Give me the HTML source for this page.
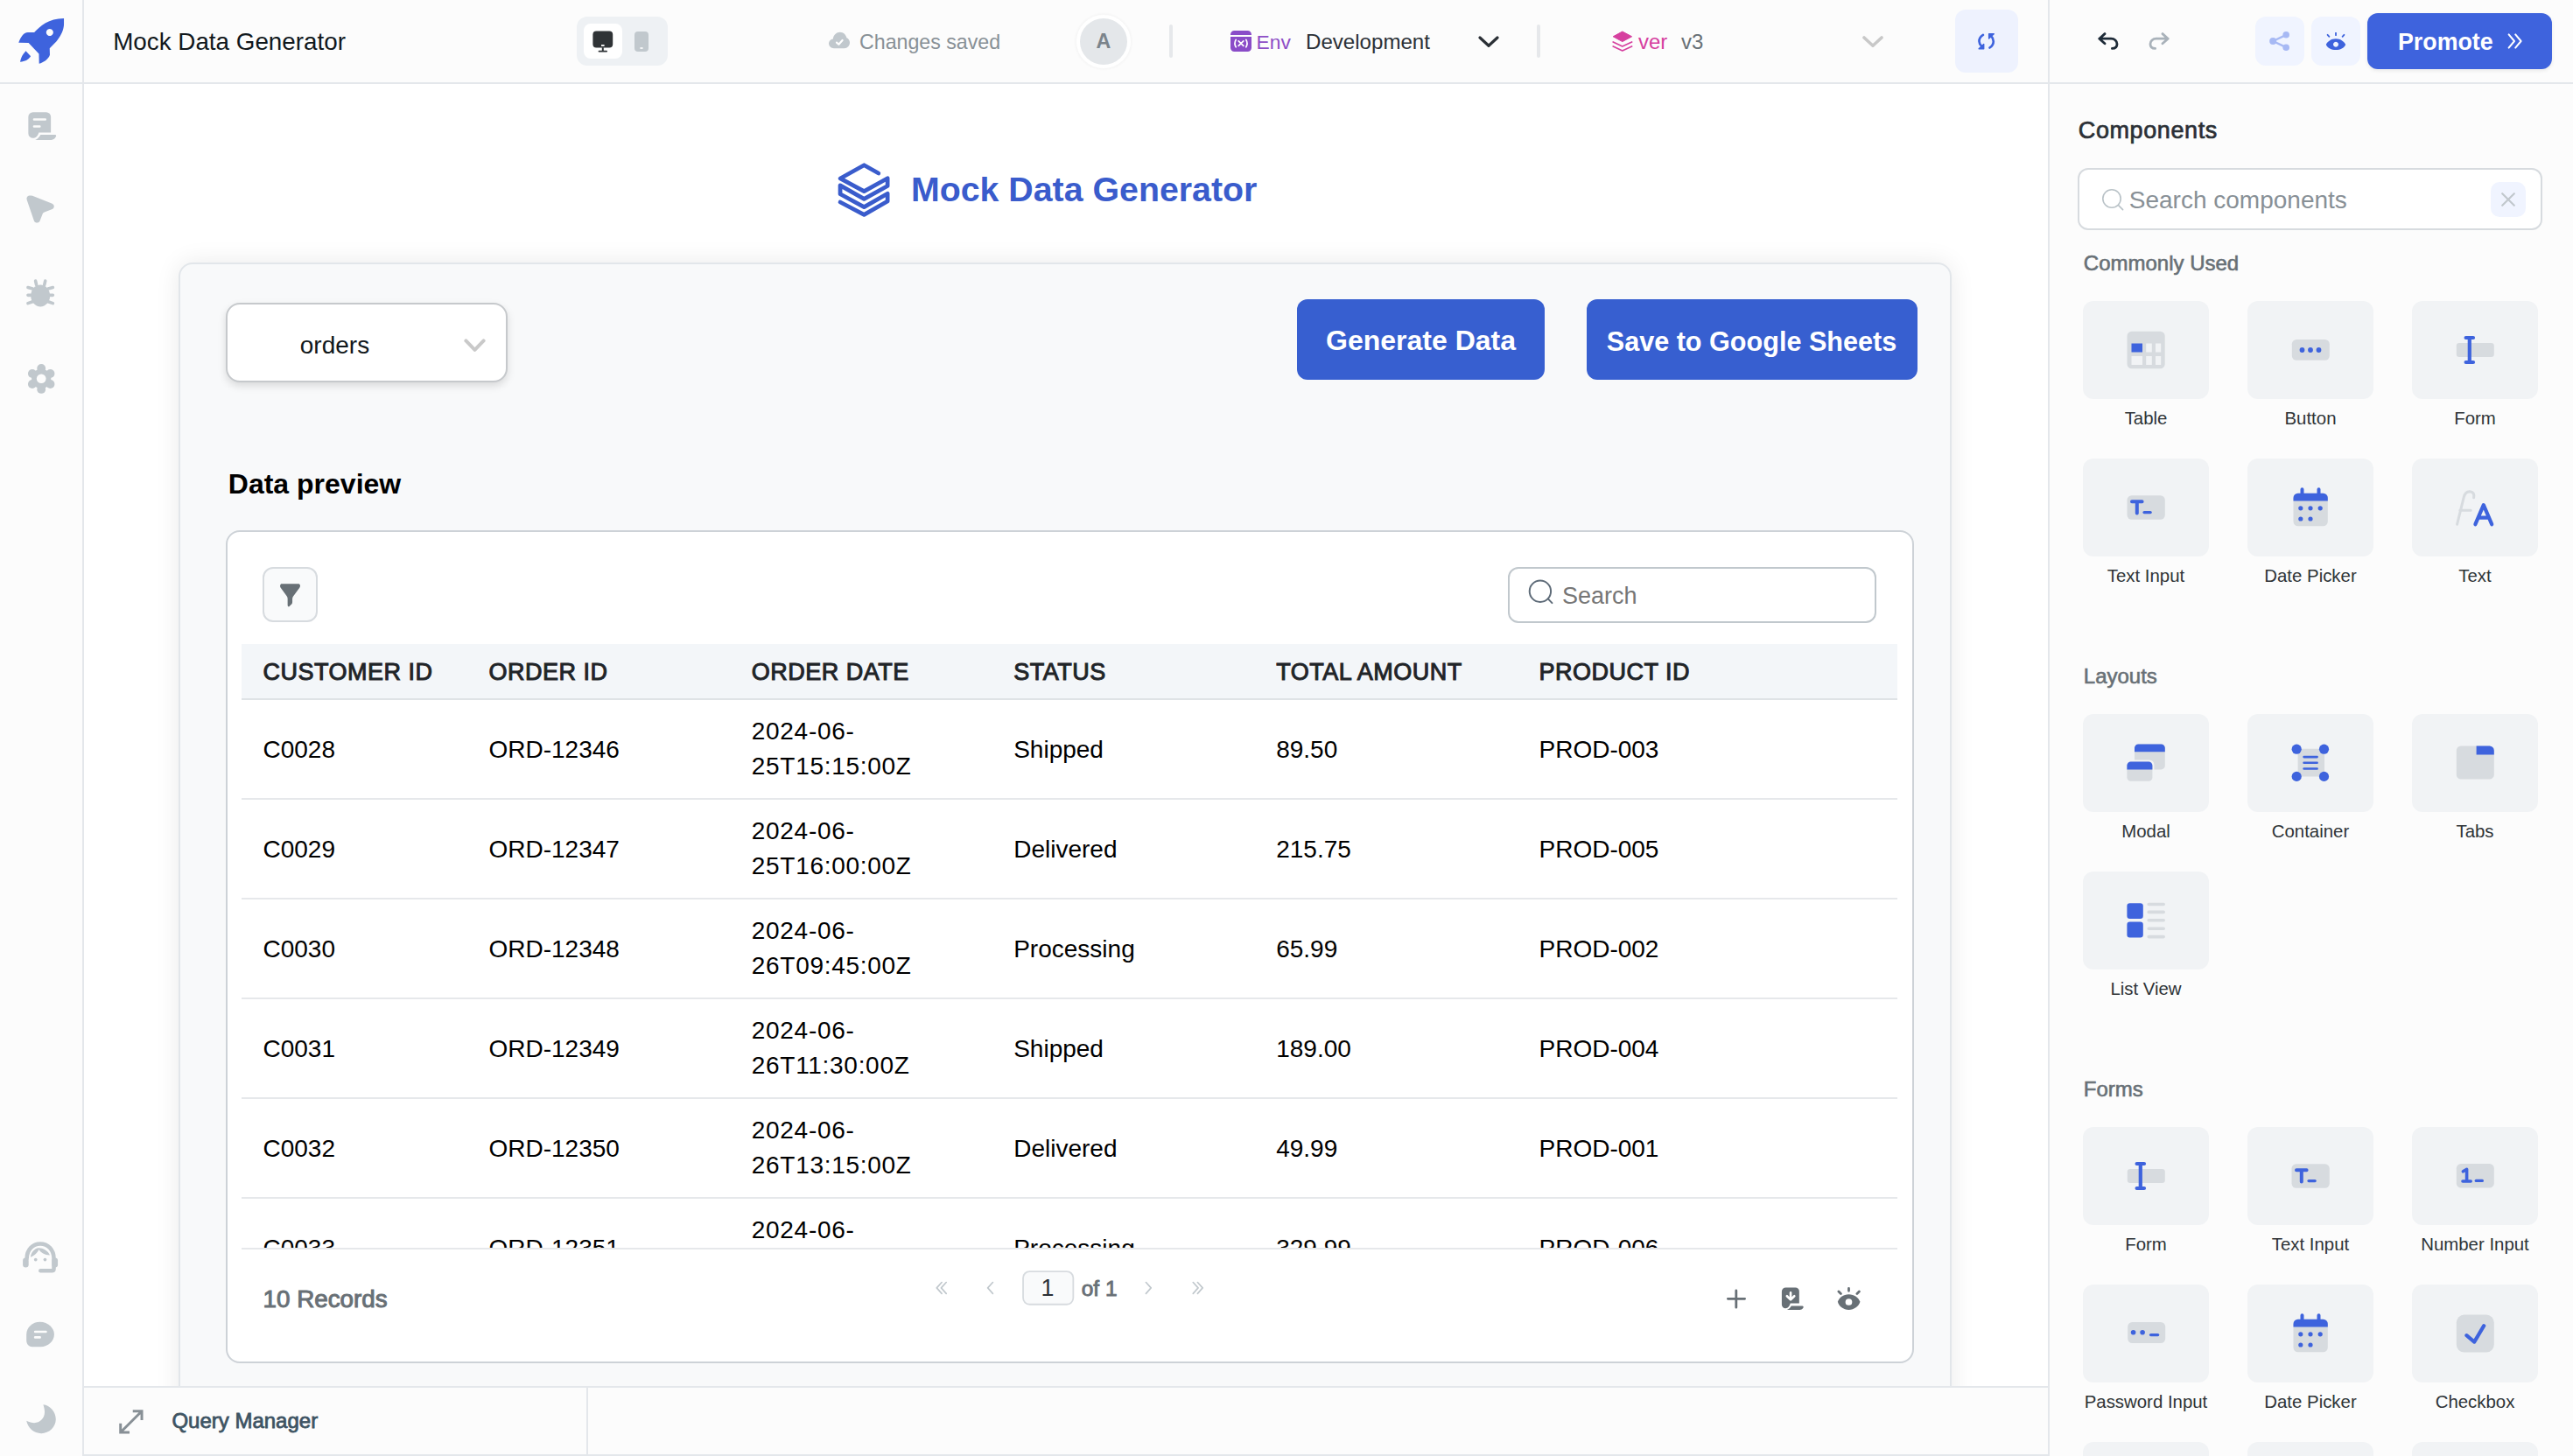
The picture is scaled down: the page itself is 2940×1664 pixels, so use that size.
<!DOCTYPE html>
<html>
<head>
<meta charset="utf-8">
<style>
@media (min-width: 2000px) { html { zoom: 2; } }
* { box-sizing: border-box; margin: 0; padding: 0; }
html, body { width: 1470px; height: 832px; overflow: hidden; background: #fff; }
body { font-family: "Liberation Sans", sans-serif; color: #11181c; position: relative; }
.abs { position: absolute; }
.nw { white-space: nowrap; }
svg { display: block; position: absolute; }
#header { left: 0; top: 0; width: 1470px; height: 48px; background: #fcfcfc; border-bottom: 1px solid #e4e7eb; }
#sidebar { left: 0; top: 0; width: 48px; height: 832px; background: #fcfcfc; border-right: 1px solid #e4e7eb; }
#rpanel { left: 1170px; top: 48px; width: 300px; height: 784px; background: #fcfcfc; border-left: 1px solid #e4e7eb; }
#hsep { left: 1170px; top: 0; width: 1px; height: 48px; background: #e4e7eb; }
#qbar { left: 48px; top: 792px; width: 1122px; height: 40px; background: #fcfcfc; border-top: 1px solid #e4e7eb; border-bottom: 1px solid #e4e7eb; }
.txt { position: absolute; white-space: nowrap; line-height: 1; }
</style>
</head>
<body>
<!-- ============ CANVAS ============ -->
<div id="canvas" class="abs" style="left:48px;top:48px;width:1122px;height:744px;background:#fff;overflow:hidden">
  <!-- heading logo -->
  <svg style="left:427px;top:42px" width="40" height="37.5" viewBox="0 0 1553 1456">
    <path fill="none" stroke="#3a5ccc" stroke-width="92" stroke-linecap="round" stroke-linejoin="round" d="M1045 350 L725 170 L195 465 L725 750 L1245 460 L1245 630 L725 920 L195 620 L195 810 L725 1100 L1245 800 L1245 970 L725 1270 L195 990"/>
  </svg>
  <div class="txt" style="left:472.5px;top:50.5px;font-size:19.65px;font-weight:700;color:#3a5ccc">Mock Data Generator</div>

  <!-- container -->
  <div class="abs" style="left:54px;top:102px;width:1013px;height:720px;background:#f8f9fa;border:1px solid #e2e6ea;border-radius:8px;box-shadow:0 0 14px rgba(0,0,0,0.085)">
  </div>
</div>


<!-- ============ CONTAINER CONTENT ============ -->
<!-- dropdown -->
<div class="abs" style="left:129px;top:173px;width:161px;height:45.5px;background:#fff;border:1px solid #c6c9cc;border-radius:8px;box-shadow:0 2px 5px rgba(0,0,0,0.13)"></div>
<div class="txt" style="left:171.4px;top:190.25px;font-size:14px;color:#11181c">orders</div>
<svg style="left:265px;top:193.5px" width="12.5" height="8" viewBox="0 0 12.5 8">
  <path fill="none" stroke="#c9c9c9" stroke-width="2" stroke-linecap="round" stroke-linejoin="round" d="M1.2 1.2 L6.25 6.4 L11.3 1.2"/>
</svg>
<!-- buttons -->
<div class="abs" style="left:741px;top:171px;width:141.5px;height:46px;background:#375fd0;border-radius:6px"></div>
<div class="txt" style="left:741px;width:141.5px;text-align:center;top:186.7px;font-size:16px;font-weight:700;color:#fff">Generate Data</div>
<div class="abs" style="left:906.25px;top:171px;width:189px;height:46px;background:#375fd0;border-radius:6px"></div>
<div class="txt" style="left:906.25px;width:189px;text-align:center;top:187.3px;font-size:15.3px;font-weight:700;color:#fff">Save to Google Sheets</div>
<!-- data preview -->
<div class="txt" style="left:130.4px;top:268.56px;font-size:16px;font-weight:700;color:#000">Data preview</div>

<!-- table -->
<div class="abs" style="left:129px;top:303px;width:964.25px;height:475.75px;background:#fff;border:1px solid #cdd2d7;border-radius:8px;overflow:hidden">
<div class="abs" style="left:-1px;top:-1px;width:964.25px;height:475.75px">
  <div class="abs" style="left:21px;top:21px;width:31.5px;height:31.5px;background:#f9fafb;border:1px solid #d7dbdf;border-radius:6px"></div>
  <svg style="left:19px;top:19px" width="36" height="36" viewBox="0 0 1456 1456">
    <path fill="#687076" d="M520 470 H910 C950 470 965 520 935 560 L790 760 C775 785 770 800 770 830 V890 C770 920 760 935 740 950 L700 990 C680 1005 660 990 660 960 V810 C660 790 650 770 640 755 L500 560 C475 520 490 470 520 470 Z"/>
  </svg>
  <div class="abs" style="left:732.5px;top:21px;width:210.5px;height:32px;background:#fff;border:1px solid #c1c8cd;border-radius:6px"></div>
  <svg style="left:738.5px;top:22px" width="30" height="25" viewBox="0 0 1747 1456">
    <g fill="none" stroke="#5e6b78" stroke-width="58" stroke-linecap="round"><circle cx="725" cy="750" r="355"/><path d="M985 1000 L1120 1140"/></g>
  </svg>
  <div class="txt" style="left:763.5px;top:30.97px;font-size:13.5px;color:#767676">Search</div>

  <div class="abs" style="left:8.75px;top:65px;width:946.25px;height:32px;background:#f3f6f9;border-bottom:1px solid #dfe3e6"></div>
    <div class="txt" style="left:21.25px;top:74.32px;font-size:13.5px;letter-spacing:0.25px;-webkit-text-stroke:0.5px #1f2428;color:#1f2428">CUSTOMER ID</div>
    <div class="txt" style="left:150.25px;top:74.32px;font-size:13.5px;letter-spacing:0.25px;-webkit-text-stroke:0.5px #1f2428;color:#1f2428">ORDER ID</div>
    <div class="txt" style="left:300.40px;top:74.32px;font-size:13.5px;letter-spacing:0.25px;-webkit-text-stroke:0.5px #1f2428;color:#1f2428">ORDER DATE</div>
    <div class="txt" style="left:450.10px;top:74.32px;font-size:13.5px;letter-spacing:0.25px;-webkit-text-stroke:0.5px #1f2428;color:#1f2428">STATUS</div>
    <div class="txt" style="left:600.10px;top:74.32px;font-size:13.5px;letter-spacing:0.25px;-webkit-text-stroke:0.5px #1f2428;color:#1f2428">TOTAL AMOUNT</div>
    <div class="txt" style="left:750.25px;top:74.32px;font-size:13.5px;letter-spacing:0.25px;-webkit-text-stroke:0.5px #1f2428;color:#1f2428">PRODUCT ID</div>
  <div class="abs" style="left:0;top:97px;width:962px;height:313px;overflow:hidden;font-size:14px;color:#000">
      <div class="txt" style="left:21.25px;top:21.55px">C0028</div>
      <div class="txt" style="left:150.25px;top:21.55px">ORD-12346</div>
      <div class="txt" style="left:300.40px;top:11.15px;letter-spacing:0.35px">2024-06-</div>
      <div class="txt" style="left:300.40px;top:31.15px;letter-spacing:0.35px">25T15:15:00Z</div>
      <div class="txt" style="left:450.10px;top:21.55px">Shipped</div>
      <div class="txt" style="left:600.10px;top:21.55px">89.50</div>
      <div class="txt" style="left:750.25px;top:21.55px">PROD-003</div>
      <div class="abs" style="left:8.75px;top:56.00px;width:946.25px;height:1px;background:#e6e8eb"></div>
      <div class="txt" style="left:21.25px;top:78.49px">C0029</div>
      <div class="txt" style="left:150.25px;top:78.49px">ORD-12347</div>
      <div class="txt" style="left:300.40px;top:68.09px;letter-spacing:0.35px">2024-06-</div>
      <div class="txt" style="left:300.40px;top:88.09px;letter-spacing:0.35px">25T16:00:00Z</div>
      <div class="txt" style="left:450.10px;top:78.49px">Delivered</div>
      <div class="txt" style="left:600.10px;top:78.49px">215.75</div>
      <div class="txt" style="left:750.25px;top:78.49px">PROD-005</div>
      <div class="abs" style="left:8.75px;top:112.94px;width:946.25px;height:1px;background:#e6e8eb"></div>
      <div class="txt" style="left:21.25px;top:135.43px">C0030</div>
      <div class="txt" style="left:150.25px;top:135.43px">ORD-12348</div>
      <div class="txt" style="left:300.40px;top:125.03px;letter-spacing:0.35px">2024-06-</div>
      <div class="txt" style="left:300.40px;top:145.03px;letter-spacing:0.35px">26T09:45:00Z</div>
      <div class="txt" style="left:450.10px;top:135.43px">Processing</div>
      <div class="txt" style="left:600.10px;top:135.43px">65.99</div>
      <div class="txt" style="left:750.25px;top:135.43px">PROD-002</div>
      <div class="abs" style="left:8.75px;top:169.88px;width:946.25px;height:1px;background:#e6e8eb"></div>
      <div class="txt" style="left:21.25px;top:192.37px">C0031</div>
      <div class="txt" style="left:150.25px;top:192.37px">ORD-12349</div>
      <div class="txt" style="left:300.40px;top:181.97px;letter-spacing:0.35px">2024-06-</div>
      <div class="txt" style="left:300.40px;top:201.97px;letter-spacing:0.35px">26T11:30:00Z</div>
      <div class="txt" style="left:450.10px;top:192.37px">Shipped</div>
      <div class="txt" style="left:600.10px;top:192.37px">189.00</div>
      <div class="txt" style="left:750.25px;top:192.37px">PROD-004</div>
      <div class="abs" style="left:8.75px;top:226.82px;width:946.25px;height:1px;background:#e6e8eb"></div>
      <div class="txt" style="left:21.25px;top:249.31px">C0032</div>
      <div class="txt" style="left:150.25px;top:249.31px">ORD-12350</div>
      <div class="txt" style="left:300.40px;top:238.91px;letter-spacing:0.35px">2024-06-</div>
      <div class="txt" style="left:300.40px;top:258.91px;letter-spacing:0.35px">26T13:15:00Z</div>
      <div class="txt" style="left:450.10px;top:249.31px">Delivered</div>
      <div class="txt" style="left:600.10px;top:249.31px">49.99</div>
      <div class="txt" style="left:750.25px;top:249.31px">PROD-001</div>
      <div class="abs" style="left:8.75px;top:283.76px;width:946.25px;height:1px;background:#e6e8eb"></div>
      <div class="txt" style="left:21.25px;top:306.25px">C0033</div>
      <div class="txt" style="left:150.25px;top:306.25px">ORD-12351</div>
      <div class="txt" style="left:300.40px;top:295.85px;letter-spacing:0.35px">2024-06-</div>
      <div class="txt" style="left:300.40px;top:315.85px;letter-spacing:0.35px">26T15:00:00Z</div>
      <div class="txt" style="left:450.10px;top:306.25px">Processing</div>
      <div class="txt" style="left:600.10px;top:306.25px">329.99</div>
      <div class="txt" style="left:750.25px;top:306.25px">PROD-006</div>
  </div>
  <div class="abs" style="left:8.75px;top:410px;width:946.25px;height:1px;background:#e6e8eb"></div>
  <div class="txt" style="left:21.25px;top:432.48px;font-size:13.9px;-webkit-text-stroke:0.5px #687076;color:#687076">10 Records</div>
  <svg style="left:401px;top:419.5px" width="165" height="27.5" viewBox="0 0 2573 429">
    <g fill="none" stroke="#c1c8cd" stroke-width="13" stroke-linecap="round" stroke-linejoin="round">
      <path d="M165 160 L120 210 L165 260 M125 160 L80 210 L125 260 M580 160 L535 210 L580 260 M1945 160 L1990 210 L1945 260 M2365 160 L2410 210 L2365 260 M2405 160 L2450 210 L2405 260"/>
    </g>
    <rect x="850" y="63" width="447" height="294" rx="58" fill="#f9fafb" stroke="#d7dbdf" stroke-width="14"/>
  </svg>
  <div class="txt" style="left:465.75px;top:426.66px;font-size:13.4px;color:#2b3036">1</div>
  <div class="txt" style="left:488.9px;top:427.27px;font-size:12.2px;-webkit-text-stroke:0.45px #687076;color:#687076">of 1</div>
  <svg style="left:851px;top:424.5px" width="90" height="30" viewBox="0 0 2573 858">
    <g fill="#687076">
      <path d="M1150 235 H1310 A60 60 0 0 1 1370 295 V495 H1225 C1210 540 1190 575 1145 575 A60 60 0 0 1 1085 515 V300 A65 65 0 0 1 1150 235 Z"/>
      <path d="M1240 535 H1420 C1440 535 1445 555 1435 570 C1420 595 1400 600 1380 600 H1170 C1200 590 1225 565 1240 535 Z"/>
      <path d="M2180 345 C2270 345 2340 400 2365 470 C2340 545 2270 600 2180 600 C2090 600 2020 545 2000 470 C2020 400 2090 345 2180 345 Z"/>
    </g>
    <circle cx="2180" cy="472" r="55" fill="#fff"/>
    <g fill="none" stroke="#fff" stroke-width="38" stroke-linecap="round" stroke-linejoin="round"><path d="M1230 320 V425 M1170 375 L1230 435 L1290 375"/></g>
    <g fill="none" stroke="#687076" stroke-width="40" stroke-linecap="round"><path d="M205 420 H480 M340 285 V560 M2180 250 V290 M2015 300 L2050 335 M2350 300 L2315 335"/></g>
  </svg>
</div>
</div>

<!-- ============ FRAME ============ -->
<div id="sidebar" class="abs"></div>
<div id="rpanel" class="abs"></div>
<div id="header" class="abs"></div>
<div id="hsep" class="abs"></div>
<div id="qbar" class="abs"></div>

<!-- ============ HEADER CONTENT ============ -->
<div id="hdr" class="abs" style="left:0;top:0;width:1470px;height:48px">
  <!-- rocket -->
  <svg style="left:7.5px;top:7.5px" width="32.5" height="32.5" viewBox="0 0 1456 1456">
    <path fill="#3e63dd" fill-rule="evenodd" d="M1300 135 L1300 300 C1290 420 1240 560 1110 720 L935 900 L940 1070 C900 1190 780 1260 665 1295 L660 1040 L395 760 L140 755 C200 610 260 500 380 495 L540 495 C700 330 900 140 1300 135 Z M937 405 A90 90 0 1 0 937.1 405 Z"/>
    <path fill="#3e63dd" d="M325 970 L450 1105 C390 1200 300 1240 180 1250 C200 1150 230 1070 325 970 Z"/>
  </svg>
  <div class="txt" style="left:64.6px;top:16.9px;font-size:13.9px;color:#11181c">Mock Data Generator</div>

  <!-- device toggle -->
  <div class="abs" style="left:329.5px;top:9.5px;width:52px;height:28px;background:#eef1f4;border-radius:6px"></div>
  <div class="abs" style="left:333.5px;top:13.5px;width:22px;height:20px;background:#fff;border-radius:4px"></div>
  <svg style="left:338.5px;top:17.5px" width="12" height="13" viewBox="0 0 12 13">
    <rect x="0.2" y="0.3" width="11.4" height="9.4" rx="2" fill="#2f3336"/>
    <rect x="5" y="8" width="1.8" height="0.9" fill="#fff"/>
    <rect x="5.4" y="9.6" width="1" height="2.2" fill="#2f3336"/>
    <rect x="3.3" y="11.4" width="5.2" height="0.9" rx="0.4" fill="#2f3336"/>
  </svg>
  <svg style="left:362.5px;top:17.9px" width="8" height="12" viewBox="0 0 8 12">
    <rect x="0" y="0" width="8" height="11.5" rx="2" fill="#c1c8cd"/>
    <rect x="3.2" y="9.1" width="1.6" height="0.8" fill="#fff"/>
  </svg>

  <!-- changes saved -->
  <svg style="left:473.5px;top:18px" width="12" height="10" viewBox="0 0 12 10">
    <path fill="#c1c8cd" d="M3 9.6 C1.3 9.6 0 8.4 0 6.9 C0 5.5 1.1 4.4 2.4 4.2 C2.7 2 4.4 0.4 6.4 0.4 C8.3 0.4 9.8 1.8 10.2 3.6 C11.3 4 12 5.1 12 6.4 C12 8.2 10.6 9.6 8.9 9.6 Z"/>
    <path fill="none" stroke="#fff" stroke-width="1.1" stroke-linecap="round" stroke-linejoin="round" d="M4.5 6.3 L5.7 7.4 L7.8 5"/>
  </svg>
  <div class="txt" style="left:491px;top:18.34px;font-size:11.6px;color:#889096">Changes saved</div>

  <!-- avatar -->
  <div class="abs" style="left:617px;top:10.5px;width:27px;height:26.5px;border-radius:50%;background:#e4e7ea;box-shadow:0 0 0 2px #fff,0 0 1px 3px rgba(0,0,0,0.025)"></div>
  <div class="txt" style="left:626.3px;top:18.1px;font-size:11.6px;font-weight:700;color:#7b848b">A</div>

  <!-- divider -->
  <div class="abs" style="left:668px;top:14px;width:2px;height:19px;background:#e6e8eb;border-radius:1px"></div>

  <!-- env -->
  <svg style="left:703px;top:17.5px" width="12" height="12" viewBox="0 0 12 12">
    <path fill="#8a4cc8" d="M0 2.5 V2.2 A2.2 2.2 0 0 1 2.2 0 H9.8 A2.2 2.2 0 0 1 12 2.2 V2.5 Z"/>
    <path fill="#8a4cc8" d="M0 3.5 H12 V9.8 A2.2 2.2 0 0 1 9.8 12 H2.2 A2.2 2.2 0 0 1 0 9.8 Z"/>
    <g fill="none" stroke="#fff" stroke-width="0.85" stroke-linecap="round">
      <path d="M3.1 5.2 C2.4 6.4 2.4 8.2 3.1 9.4 M8.9 5.2 C9.6 6.4 9.6 8.2 8.9 9.4 M4.6 5.9 L7.4 8.7 M7.4 5.9 L4.6 8.7"/>
    </g>
  </svg>
  <div class="txt" style="left:717.8px;top:18.3px;font-size:11.4px;color:#8e4ec6">Env</div>
  <div class="txt" style="left:746px;top:17.94px;font-size:12.05px;color:#2b3036">Development</div>
  <svg style="left:844.5px;top:20.5px" width="12" height="7" viewBox="0 0 12 7">
    <path fill="none" stroke="#2b3036" stroke-width="1.6" stroke-linecap="round" stroke-linejoin="round" d="M1 1 L6 5.6 L11 1"/>
  </svg>

  <!-- divider -->
  <div class="abs" style="left:878px;top:14px;width:2px;height:19px;background:#e6e8eb;border-radius:1px"></div>

  <!-- version -->
  <svg style="left:920.5px;top:17.5px" width="13" height="12" viewBox="0 0 13 12">
    <path fill="#d6409f" stroke="#d6409f" stroke-width="0.5" stroke-linejoin="round" d="M6.4 0.5 L11.8 3.4 L6.4 6.3 L1.1 3.4 Z"/>
    <path fill="none" stroke="#d6409f" stroke-width="0.85" stroke-linecap="round" stroke-linejoin="round" d="M1.1 6.5 L6.4 9 L11.8 6.5 M1.1 9 L6.4 11.5 L11.8 9"/>
  </svg>
  <div class="txt" style="left:936px;top:17.94px;font-size:12px;color:#d6409f">ver</div>
  <div class="txt" style="left:960.5px;top:17.94px;font-size:12px;color:#687076">v3</div>
  <svg style="left:1064px;top:20.5px" width="12" height="7" viewBox="0 0 12 7">
    <path fill="none" stroke="#c8c8c8" stroke-width="1.8" stroke-linecap="round" stroke-linejoin="round" d="M1 1 L6 5.6 L11 1"/>
  </svg>

  <!-- refresh -->
  <div class="abs" style="left:1117px;top:5.5px;width:36px;height:36px;background:#eef2fe;border-radius:6px"></div>
  <svg style="left:1120px;top:10px" width="30" height="25" viewBox="0 0 1747 1456">
    <g fill="none" stroke="#3e63dd" stroke-width="78" stroke-linecap="round" stroke-linejoin="round">
      <path d="M755 580 C660 640 625 710 625 790 C625 850 650 900 715 960"/>
      <path d="M975 1005 C1070 940 1100 870 1100 790 C1100 720 1070 660 1010 600"/>
    </g>
    <g fill="#3e63dd" stroke="#3e63dd" stroke-width="40" stroke-linejoin="round">
      <path d="M778 885 L778 1040 L615 1040 Z"/>
      <path d="M950 700 L950 545 L1115 545 Z"/>
    </g>
  </svg>

  <!-- undo/redo -->
  <svg style="left:1198.5px;top:18.5px" width="12" height="10" viewBox="0 0 12 10">
    <path fill="none" stroke="#1e2b38" stroke-width="1.4" stroke-linecap="round" stroke-linejoin="round" d="M4 0.8 L0.9 3.6 L4 6.4 M0.9 3.6 H7.6 C9.6 3.6 11 5 11 6.6 C11 8.2 9.9 9.2 8.2 9.2"/>
  </svg>
  <svg style="left:1227.5px;top:18.5px" width="12" height="10" viewBox="0 0 12 10">
    <path fill="none" stroke="#a9b2ba" stroke-width="1.4" stroke-linecap="round" stroke-linejoin="round" d="M8 0.8 L11.1 3.6 L8 6.4 M11.1 3.6 H4.4 C2.4 3.6 1 5 1 6.6 C1 8.2 2.1 9.2 3.8 9.2"/>
  </svg>

  <!-- share / preview -->
  <div class="abs" style="left:1288.5px;top:9.5px;width:28px;height:28px;background:#f0f4ff;border-radius:6px"></div>
  <svg style="left:1296.5px;top:18px" width="12" height="11" viewBox="0 0 12 11">
    <g fill="#a7b9f4"><circle cx="2.1" cy="5.5" r="2"/><circle cx="9.6" cy="1.9" r="1.9"/><circle cx="9.6" cy="9.1" r="1.9"/></g>
    <path fill="none" stroke="#a7b9f4" stroke-width="1.2" d="M2.1 5.5 L9.6 1.9 M2.1 5.5 L9.6 9.1"/>
  </svg>
  <div class="abs" style="left:1320.5px;top:9.5px;width:28px;height:28px;background:#f0f4ff;border-radius:6px"></div>
  <svg style="left:1328.5px;top:18.5px" width="12" height="10" viewBox="0 0 12 10">
    <path fill="#3e63dd" fill-rule="evenodd" d="M6 3.6 C8.6 3.6 10.6 5 11.6 7 C10.6 9 8.6 10 6 10 C3.4 10 1.4 9 0.4 7 C1.4 5 3.4 3.6 6 3.6 Z M6 5.4 A1.5 1.5 0 1 0 6.01 5.4 Z"/>
    <path fill="none" stroke="#3e63dd" stroke-width="0.9" stroke-linecap="round" d="M6 0.3 V1.6 M1.3 1.4 L2.2 2.4 M10.7 1.4 L9.8 2.4"/>
  </svg>

  <!-- promote -->
  <div class="abs" style="left:1352.5px;top:7.5px;width:105.5px;height:32px;background:#3e63dd;border-radius:6px;box-shadow:0 1px 2px rgba(0,0,0,0.08)"></div>
  <div class="txt" style="left:1370px;top:17.36px;font-size:13.4px;font-weight:700;color:#fff">Promote</div>
  <svg style="left:1432.5px;top:18.5px" width="9" height="10" viewBox="0 0 9 10">
    <path fill="none" stroke="#fff" stroke-width="1" stroke-linecap="round" stroke-linejoin="round" d="M0.8 1.2 L4 5 L0.8 8.8 M4.6 1.2 L7.8 5 L4.6 8.8"/>
  </svg>
</div>

<!-- ============ SIDEBAR CONTENT ============ -->
<div class="abs" style="left:47px;top:0;width:1px;height:48px;background:#e4e7eb"></div>
<svg style="left:10px;top:57.5px" width="30" height="30" viewBox="0 0 1456 1456">
  <path fill="#c1c8cd" d="M430 320 H795 A130 130 0 0 1 925 450 V885 H590 C570 960 520 1040 430 1040 A130 130 0 0 1 300 910 V450 A130 130 0 0 1 430 320 Z"/>
  <path fill="#c1c8cd" d="M640 945 H1045 C1075 945 1080 980 1060 1010 C1030 1060 990 1090 940 1090 H490 C560 1060 600 1010 640 945 Z"/>
  <path stroke="#fcfcfc" stroke-width="62" stroke-linecap="round" d="M460 520 H770 M460 715 H615"/>
</svg>
<svg style="left:10px;top:105px" width="30" height="30" viewBox="0 0 1456 1456">
  <path fill="#c1c8cd" d="M330 330 C380 320 420 330 460 350 L950 545 C1040 580 1030 680 950 710 L760 780 C720 795 705 810 690 850 L620 1030 C590 1100 490 1100 460 1030 L260 450 C240 390 270 340 330 330 Z"/>
</svg>
<svg style="left:10px;top:152.5px" width="30" height="30" viewBox="0 0 1456 1456">
  <ellipse cx="635" cy="800" rx="265" ry="305" fill="#c1c8cd"/>
  <path fill="none" stroke="#c1c8cd" stroke-width="88" stroke-linecap="round" d="M500 390 L525 500 M770 390 L745 500 M290 570 L420 605 M980 570 L850 605 M290 785 H400 M980 785 H870 M290 1010 L420 965 M980 1010 L850 965"/>
</svg>
<svg style="left:10px;top:200px" width="30" height="30" viewBox="0 0 1456 1456">
  <g fill="#c1c8cd">
    <circle cx="660" cy="800" r="270"/>
    <circle cx="660" cy="510" r="120"/><circle cx="660" cy="1090" r="120"/>
    <circle cx="410" cy="655" r="120"/><circle cx="910" cy="655" r="120"/>
    <circle cx="410" cy="945" r="120"/><circle cx="910" cy="945" r="120"/>
  </g>
  <circle cx="660" cy="795" r="130" fill="#fcfcfc"/>
</svg>
<svg style="left:8px;top:703.5px" width="30" height="30" viewBox="0 0 1456 1456">
  <g fill="none" stroke="#c1c8cd" stroke-linecap="round" stroke-linejoin="round" stroke-width="110">
    <path d="M355 760 C355 520 520 350 730 350 C940 350 1105 520 1105 760 V1050 Q1105 1100 1050 1100 H735"/>
  </g>
  <g fill="#c1c8cd">
    <rect x="245" y="740" width="160" height="270" rx="80"/>
    <rect x="1050" y="740" width="165" height="270" rx="80"/>
    <path d="M460 720 C470 600 560 480 690 470 C800 470 950 550 995 670 C850 660 740 600 690 510 C650 600 560 690 460 720 Z"/>
    <circle cx="600" cy="790" r="45"/><circle cx="860" cy="790" r="45"/>
  </g>
</svg>
<svg style="left:8px;top:747.5px" width="30" height="30" viewBox="0 0 1456 1456">
  <path fill="#c1c8cd" d="M720 385 C950 385 1115 560 1115 730 C1115 920 940 1075 740 1075 H500 C420 1075 345 1010 345 900 V730 C345 540 510 385 720 385 Z"/>
  <path stroke="#fcfcfc" stroke-width="62" stroke-linecap="round" d="M585 655 H885 M585 810 H720"/>
</svg>
<svg style="left:8px;top:796px" width="30" height="30" viewBox="0 0 1456 1456">
  <path fill="#c1c8cd" d="M810 320 C1000 340 1160 520 1160 730 C1160 950 970 1120 760 1120 C550 1120 380 960 345 770 C420 810 500 830 560 830 C720 830 850 700 850 530 C850 450 830 380 810 320 Z"/>
</svg>

<!-- ============ QUERY BAR CONTENT ============ -->
<svg style="left:60px;top:797.5px" width="30" height="30" viewBox="0 0 1456 1456">
  <path fill="none" stroke="#889096" stroke-width="72" stroke-linejoin="miter" d="M770 430 H1020 V680 M1020 430 L430 1020 M430 770 V1020 H680"/>
</svg>
<div class="txt" style="left:98.2px;top:806.09px;font-size:12px;-webkit-text-stroke:0.4px #3e5463;color:#3e5463">Query Manager</div>
<div class="abs" style="left:335px;top:793px;width:1px;height:38px;background:#e4e7eb"></div>

<!-- ============ RIGHT PANEL CONTENT ============ -->
<div class="txt" style="left:1187.4px;top:67.97px;font-size:13.5px;letter-spacing:0.3px;-webkit-text-stroke:0.35px #2b3036;color:#2b3036">Components</div>
<div class="abs" style="left:1187.2px;top:96px;width:265.5px;height:35.5px;background:#fff;border:1px solid #d7dbdf;border-radius:6px"></div>
<svg style="left:1200.5px;top:107.5px" width="13.5" height="13.5" viewBox="0 0 13.5 13.5">
  <g fill="none" stroke="#b9c2c7" stroke-width="0.8" stroke-linecap="round"><circle cx="6" cy="6" r="5.1"/><path d="M9.8 9.8 L12.3 12.3"/></g>
</svg>
<div class="txt" style="left:1216.4px;top:107.35px;font-size:14px;color:#889096">Search components</div>
<div class="abs" style="left:1423px;top:104px;width:20px;height:20px;background:#f0f4ff;border-radius:5px"></div>
<svg style="left:1423px;top:104px" width="20" height="20" viewBox="0 0 20 20">
  <path d="M6.6 6.6 L13.4 13.4 M13.4 6.6 L6.6 13.4" stroke="#c1c8cd" stroke-width="1.1" stroke-linecap="round"/>
</svg>
<div class="txt" style="left:1190.4px;top:144.5px;font-size:12px;-webkit-text-stroke:0.3px #687076;color:#687076">Commonly Used</div>
<div class="txt" style="left:1190.4px;top:380.4px;font-size:12px;-webkit-text-stroke:0.3px #687076;color:#687076">Layouts</div>
<div class="txt" style="left:1190.4px;top:616.5px;font-size:12px;-webkit-text-stroke:0.3px #687076;color:#687076">Forms</div>
<div class="abs" style="left:1190px;top:172px;width:72px;height:56px;background:#f1f3f5;border-radius:6px"></div>
<svg style="left:1190px;top:172px" width="72" height="56" viewBox="0 0 72 56"><rect x="25.25" y="17.4" width="21.6" height="21.2" rx="2.6" fill="#d7dbdf"/><rect x="27.75" y="24.25" width="6.25" height="5" fill="#3e63dd"/><g fill="#f1f3f5"><rect x="36.1" y="24.25" width="3.3" height="5"/><rect x="41.5" y="24.25" width="3.1" height="5"/><rect x="27.75" y="31.5" width="6.25" height="5"/><rect x="36.1" y="31.5" width="3.3" height="5"/><rect x="41.5" y="31.5" width="3.1" height="5"/></g></svg>
<div class="txt" style="left:1170px;width:112px;text-align:center;top:233.87px;font-size:10.2px;color:#2f3437">Table</div>
<div class="abs" style="left:1284px;top:172px;width:72px;height:56px;background:#f1f3f5;border-radius:6px"></div>
<svg style="left:1284px;top:172px" width="72" height="56" viewBox="0 0 72 56"><rect x="25.4" y="22" width="21.5" height="11.9" rx="2.6" fill="#d7dbdf"/><g fill="#3e63dd"><circle cx="31.25" cy="28" r="1.45"/><circle cx="36" cy="28" r="1.45"/><circle cx="40.75" cy="28" r="1.45"/></g></svg>
<div class="txt" style="left:1264px;width:112px;text-align:center;top:233.87px;font-size:10.2px;color:#2f3437">Button</div>
<div class="abs" style="left:1378px;top:172px;width:72px;height:56px;background:#f1f3f5;border-radius:6px"></div>
<svg style="left:1378px;top:172px" width="72" height="56" viewBox="0 0 72 56"><rect x="25.4" y="24" width="21.5" height="8" rx="1.6" fill="#d7dbdf"/><path d="M32.9 21 V35 M30.8 21 H35 M30.8 35 H35" stroke="#3e63dd" stroke-width="2.1" stroke-linecap="round" fill="none"/></svg>
<div class="txt" style="left:1358px;width:112px;text-align:center;top:233.87px;font-size:10.2px;color:#2f3437">Form</div>
<div class="abs" style="left:1190px;top:262px;width:72px;height:56px;background:#f1f3f5;border-radius:6px"></div>
<svg style="left:1190px;top:262px" width="72" height="56" viewBox="0 0 72 56"><rect x="25.25" y="21.1" width="21.65" height="13.8" rx="2.6" fill="#d7dbdf"/><path d="M28 24.6 H33.8 M30.9 24.6 V31.2" stroke="#3e63dd" stroke-width="2" stroke-linecap="round" fill="none"/><path d="M35 30.8 H38.6" stroke="#3e63dd" stroke-width="1.6" stroke-linecap="round"/></svg>
<div class="txt" style="left:1170px;width:112px;text-align:center;top:323.87px;font-size:10.2px;color:#2f3437">Text Input</div>
<div class="abs" style="left:1284px;top:262px;width:72px;height:56px;background:#f1f3f5;border-radius:6px"></div>
<svg style="left:1284px;top:262px" width="72" height="56" viewBox="0 0 72 56"><rect x="26.25" y="19.9" width="19.65" height="18.7" rx="2.6" fill="#d7dbdf"/><path d="M26.25 22.5 A2.6 2.6 0 0 1 28.85 19.9 H43.3 A2.6 2.6 0 0 1 45.9 22.5 V24.25 H26.25 Z" fill="#3e63dd"/><path d="M31.25 17.6 V20.5 M40.75 17.6 V20.5" stroke="#3e63dd" stroke-width="2" stroke-linecap="round"/><g fill="#3e63dd"><circle cx="30.4" cy="28.4" r="1.3"/><circle cx="36" cy="28.4" r="1.3"/><circle cx="41.6" cy="28.4" r="1.3"/><circle cx="30.4" cy="34.5" r="1.3"/><circle cx="36" cy="34.5" r="1.3"/></g></svg>
<div class="txt" style="left:1264px;width:112px;text-align:center;top:323.87px;font-size:10.2px;color:#2f3437">Date Picker</div>
<div class="abs" style="left:1378px;top:262px;width:72px;height:56px;background:#f1f3f5;border-radius:6px"></div>
<svg style="left:1378px;top:262px" width="72" height="56" viewBox="0 0 72 56"><path d="M25.8 37.6 L29.6 22.2 C30.2 19.8 31.8 18.7 33.6 19 C35.2 19.3 35.6 20.8 35.3 22.4 M27.4 29.6 H33.6" stroke="#d7dbdf" stroke-width="1.5" stroke-linecap="round" fill="none"/><path d="M36.2 37.6 L40.9 26.6 L45.6 37.6 M37.9 33.8 H43.9" stroke="#3e63dd" stroke-width="2.1" stroke-linecap="round" stroke-linejoin="round" fill="none"/></svg>
<div class="txt" style="left:1358px;width:112px;text-align:center;top:323.87px;font-size:10.2px;color:#2f3437">Text</div>
<div class="abs" style="left:1190px;top:408px;width:72px;height:56px;background:#f1f3f5;border-radius:6px"></div>
<svg style="left:1190px;top:408px" width="72" height="56" viewBox="0 0 72 56"><rect x="29.5" y="17.2" width="17.4" height="14.5" rx="2.2" fill="#d7dbdf"/><path d="M29.5 19.4 A2.2 2.2 0 0 1 31.7 17.2 H44.7 A2.2 2.2 0 0 1 46.9 19.4 V21.65 H29.5 Z" fill="#3e63dd"/><rect x="24.2" y="26.2" width="16.5" height="13.2" rx="2.8" fill="#f1f3f5"/><rect x="25.2" y="27.2" width="14.5" height="11.2" rx="2.2" fill="#d7dbdf"/><path d="M25.2 29.4 A2.2 2.2 0 0 1 27.4 27.2 H37.5 A2.2 2.2 0 0 1 39.7 29.4 V31.7 H25.2 Z" fill="#3e63dd"/></svg>
<div class="txt" style="left:1170px;width:112px;text-align:center;top:469.87px;font-size:10.2px;color:#2f3437">Modal</div>
<div class="abs" style="left:1284px;top:408px;width:72px;height:56px;background:#f1f3f5;border-radius:6px"></div>
<svg style="left:1284px;top:408px" width="72" height="56" viewBox="0 0 72 56"><rect x="28.8" y="19.9" width="15.2" height="15.8" rx="1" fill="#d7dbdf"/><g fill="#3e63dd"><circle cx="28.1" cy="20.1" r="2.8"/><circle cx="43.75" cy="20.1" r="2.8"/><circle cx="28.1" cy="35.7" r="2.8"/><circle cx="43.75" cy="35.7" r="2.8"/></g><path d="M32.3 24.55 H39.8 M32.3 27.9 H39.8 M32.3 31.25 H39.8" stroke="#3e63dd" stroke-width="1.3" stroke-linecap="round"/></svg>
<div class="txt" style="left:1264px;width:112px;text-align:center;top:469.87px;font-size:10.2px;color:#2f3437">Container</div>
<div class="abs" style="left:1378px;top:408px;width:72px;height:56px;background:#f1f3f5;border-radius:6px"></div>
<svg style="left:1378px;top:408px" width="72" height="56" viewBox="0 0 72 56"><rect x="25.4" y="18.3" width="21.5" height="19" rx="2.6" fill="#d7dbdf"/><path d="M36.8 18.3 H44.3 A2.6 2.6 0 0 1 46.9 20.9 V23.2 H36.8 Z" fill="#3e63dd"/></svg>
<div class="txt" style="left:1358px;width:112px;text-align:center;top:469.87px;font-size:10.2px;color:#2f3437">Tabs</div>
<div class="abs" style="left:1190px;top:498px;width:72px;height:56px;background:#f1f3f5;border-radius:6px"></div>
<svg style="left:1190px;top:498px" width="72" height="56" viewBox="0 0 72 56"><rect x="25.2" y="18.1" width="9.2" height="8.9" rx="1.6" fill="#3e63dd"/><rect x="25.2" y="28.8" width="9.2" height="8.9" rx="1.6" fill="#3e63dd"/><path d="M37.6 18.75 H46.1 M37.6 23.2 H46.1 M37.6 27.9 H46.1 M37.6 32.6 H46.1 M37.6 37.3 H46.1" stroke="#d7dbdf" stroke-width="1.8" stroke-linecap="round"/></svg>
<div class="txt" style="left:1170px;width:112px;text-align:center;top:559.87px;font-size:10.2px;color:#2f3437">List View</div>
<div class="abs" style="left:1190px;top:644px;width:72px;height:56px;background:#f1f3f5;border-radius:6px"></div>
<svg style="left:1190px;top:644px" width="72" height="56" viewBox="0 0 72 56"><rect x="25.4" y="24" width="21.5" height="8" rx="1.6" fill="#d7dbdf"/><path d="M32.9 21 V35 M30.8 21 H35 M30.8 35 H35" stroke="#3e63dd" stroke-width="2.1" stroke-linecap="round" fill="none"/></svg>
<div class="txt" style="left:1170px;width:112px;text-align:center;top:705.87px;font-size:10.2px;color:#2f3437">Form</div>
<div class="abs" style="left:1284px;top:644px;width:72px;height:56px;background:#f1f3f5;border-radius:6px"></div>
<svg style="left:1284px;top:644px" width="72" height="56" viewBox="0 0 72 56"><rect x="25.25" y="21.1" width="21.65" height="13.8" rx="2.6" fill="#d7dbdf"/><path d="M28 24.6 H33.8 M30.9 24.6 V31.2" stroke="#3e63dd" stroke-width="2" stroke-linecap="round" fill="none"/><path d="M35 30.8 H38.6" stroke="#3e63dd" stroke-width="1.6" stroke-linecap="round"/></svg>
<div class="txt" style="left:1264px;width:112px;text-align:center;top:705.87px;font-size:10.2px;color:#2f3437">Text Input</div>
<div class="abs" style="left:1378px;top:644px;width:72px;height:56px;background:#f1f3f5;border-radius:6px"></div>
<svg style="left:1378px;top:644px" width="72" height="56" viewBox="0 0 72 56"><rect x="25.4" y="21" width="21.5" height="13.8" rx="2.6" fill="#d7dbdf"/><path d="M29.2 25.4 L31.3 24.2 V31 M29 31 H33.6" stroke="#3e63dd" stroke-width="1.8" stroke-linecap="round" stroke-linejoin="round" fill="none"/><path d="M36.6 30.7 H40.2" stroke="#3e63dd" stroke-width="1.6" stroke-linecap="round"/></svg>
<div class="txt" style="left:1358px;width:112px;text-align:center;top:705.87px;font-size:10.2px;color:#2f3437">Number Input</div>
<div class="abs" style="left:1190px;top:734px;width:72px;height:56px;background:#f1f3f5;border-radius:6px"></div>
<svg style="left:1190px;top:734px" width="72" height="56" viewBox="0 0 72 56"><rect x="25.6" y="21.5" width="21.5" height="12" rx="2.6" fill="#d7dbdf"/><g fill="#3e63dd"><circle cx="28.8" cy="27.35" r="1.4"/><circle cx="34.05" cy="27.35" r="1.4"/></g><path d="M38.8 28.8 H42.8" stroke="#3e63dd" stroke-width="1.7" stroke-linecap="round"/></svg>
<div class="txt" style="left:1170px;width:112px;text-align:center;top:795.87px;font-size:10.2px;color:#2f3437">Password Input</div>
<div class="abs" style="left:1284px;top:734px;width:72px;height:56px;background:#f1f3f5;border-radius:6px"></div>
<svg style="left:1284px;top:734px" width="72" height="56" viewBox="0 0 72 56"><rect x="26.25" y="19.9" width="19.65" height="18.7" rx="2.6" fill="#d7dbdf"/><path d="M26.25 22.5 A2.6 2.6 0 0 1 28.85 19.9 H43.3 A2.6 2.6 0 0 1 45.9 22.5 V24.25 H26.25 Z" fill="#3e63dd"/><path d="M31.25 17.6 V20.5 M40.75 17.6 V20.5" stroke="#3e63dd" stroke-width="2" stroke-linecap="round"/><g fill="#3e63dd"><circle cx="30.4" cy="28.4" r="1.3"/><circle cx="36" cy="28.4" r="1.3"/><circle cx="41.6" cy="28.4" r="1.3"/><circle cx="30.4" cy="34.5" r="1.3"/><circle cx="36" cy="34.5" r="1.3"/></g></svg>
<div class="txt" style="left:1264px;width:112px;text-align:center;top:795.87px;font-size:10.2px;color:#2f3437">Date Picker</div>
<div class="abs" style="left:1378px;top:734px;width:72px;height:56px;background:#f1f3f5;border-radius:6px"></div>
<svg style="left:1378px;top:734px" width="72" height="56" viewBox="0 0 72 56"><rect x="25.4" y="17.3" width="21.5" height="21.5" rx="4.5" fill="#d7dbdf"/><path d="M31.2 29.1 L35.6 32.8 L41.1 23.6" stroke="#3e63dd" stroke-width="2.1" stroke-linecap="round" stroke-linejoin="round" fill="none"/></svg>
<div class="txt" style="left:1358px;width:112px;text-align:center;top:795.87px;font-size:10.2px;color:#2f3437">Checkbox</div>
<div class="abs" style="left:1190px;top:824px;width:72px;height:56px;background:#f1f3f5;border-radius:6px"></div>
<div class="abs" style="left:1284px;top:824px;width:72px;height:56px;background:#f1f3f5;border-radius:6px"></div>
<div class="abs" style="left:1378px;top:824px;width:72px;height:56px;background:#f1f3f5;border-radius:6px"></div>
</body>
</html>
